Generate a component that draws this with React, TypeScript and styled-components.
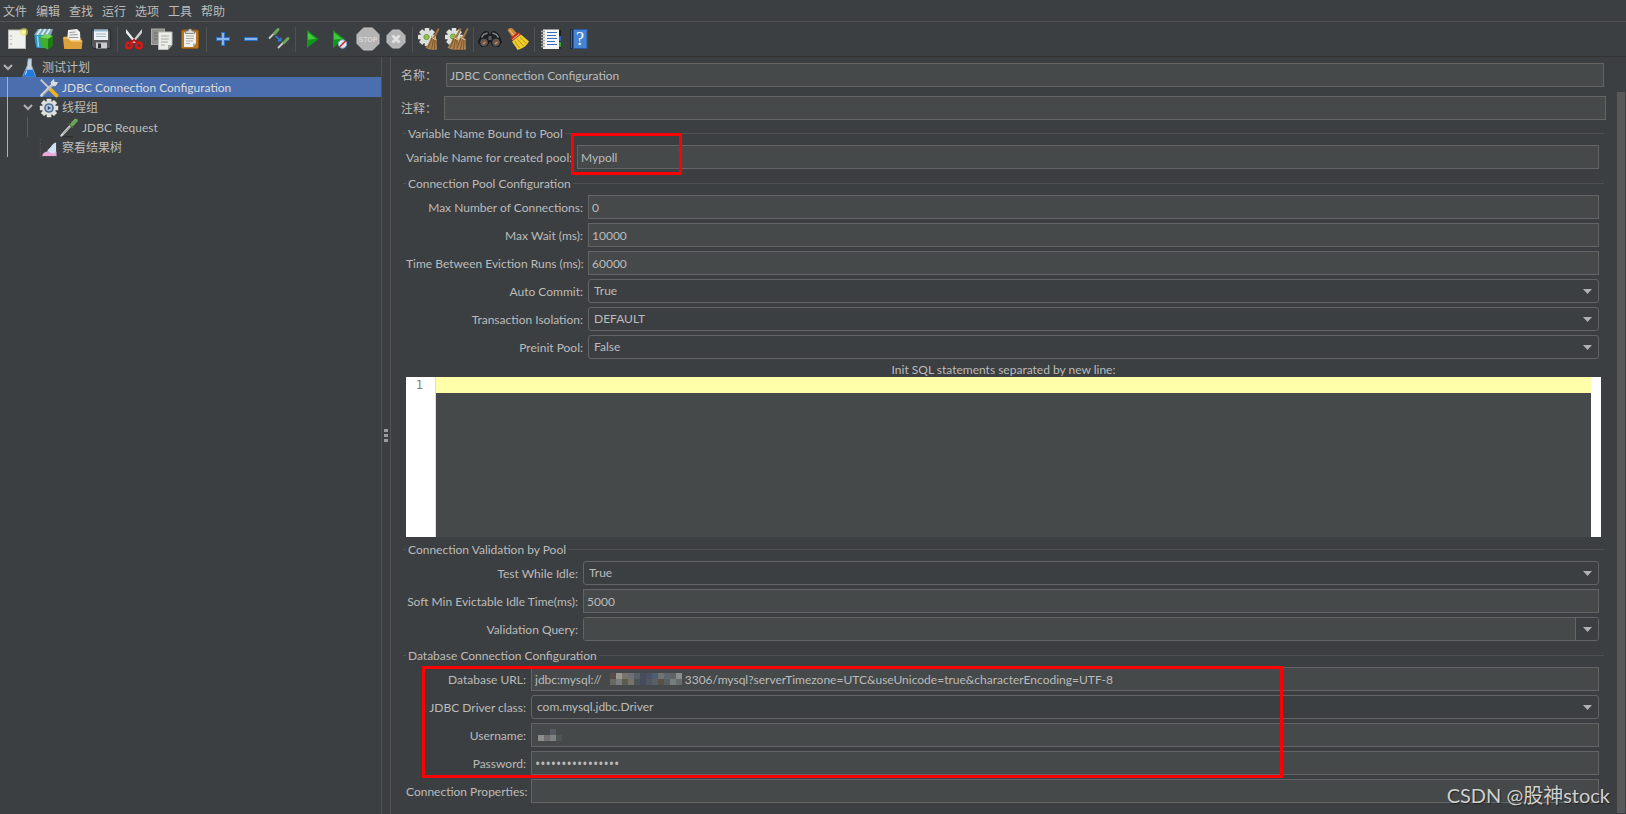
import React, { ReactNode } from 'react';
import styled, { createGlobalStyle, css } from 'styled-components';

const color = {
  panel: '#3c3f41',
  field: '#45494a',
  border: '#646464',
  line: '#515151',
  dark: '#323232',
  text: '#bbbbbb',
  selection: '#4b6eaf',
  guide: '#7fbcf5',
  mark: '#ff0000',
};

const GlobalStyle = createGlobalStyle`
  * { box-sizing: border-box; }
  body {
    margin: 0;
    background: ${color.panel};
    color: ${color.text};
    font: 12px/16px Lato, 'Noto Sans CJK SC', sans-serif;
  }
  button, input, select, textarea { font: inherit; color: inherit; margin: 0; }
`;

/* ---------- layout ---------- */

const Window = styled.div`
  position: relative;
  display: flex;
  flex-direction: column;
  min-height: 100vh;
`;

const MenuBar = styled.nav`
  display: flex;
  gap: 9px;
  height: 22px;
  padding: 2px 3px 0;
  border-bottom: 1px solid ${color.line};
`;

const MenuButton = styled.button`
  padding: 0;
  border: 0;
  background: none;
  white-space: nowrap;
`;

const Toolbar = styled.div`
  display: flex;
  align-items: center;
  height: 35px;
  padding: 0 3px;
  border-bottom: 1px solid ${color.dark};
`;

const ToolButton = styled.button`
  display: flex;
  justify-content: center;
  flex: none;
  width: 28px;
  padding: 0;
  border: 0;
  background: none;
`;

const Separator = styled.span`
  flex: none;
  width: 5px;
  height: 25px;
  background: linear-gradient(${color.line}, ${color.line}) 2px 0 / 1px 100% no-repeat;
`;

const Body = styled.div`
  display: flex;
  flex: 1;
`;

const TreePane = styled.aside`
  flex: none;
  width: 382px;
  border-right: 1px solid ${color.line};
`;

const Splitter = styled.div`
  display: flex;
  flex: none;
  align-items: center;
  justify-content: center;
  width: 9px;
  border-right: 1px solid ${color.line};
`;

const Editor = styled.main`
  flex: 1;
  min-width: 0;
  padding: 6px 10px 5px 10px;
`;

const ScrollTrack = styled.div`
  display: flex;
  flex: none;
  width: 9px;
  padding: 35px 1px 1px 0;
`;

const ScrollThumb = styled.div`
  flex: 1;
  background: #595959;
`;

/* ---------- tree ---------- */

const TreeList = styled.ul<{ $guide?: number; $active?: boolean }>`
  position: relative;
  margin: 0;
  padding: 0;
  list-style: none;
  ${p => p.$guide !== undefined && css`
    &::before {
      content: '';
      position: absolute;
      top: 0;
      bottom: 0;
      left: ${p.$guide}px;
      width: 1px;
      background: ${p.$active ? color.guide : '#565a5c'};
    }
  `}
`;

const TreeRow = styled.div<{ $level: number; $selected?: boolean }>`
  display: flex;
  align-items: center;
  height: 20px;
  padding-top: 1px;
  padding-left: ${p => p.$level * 20}px;
  ${p => p.$selected && css`background: ${color.selection}; color: #dddddd;`}
`;

const Twisty = styled.span`
  display: flex;
  justify-content: center;
  width: 16px;
`;

const NodeIcon = styled.span`
  display: flex;
  justify-content: center;
  width: 26px;
`;

/* ---------- form ---------- */

const HeaderRow = styled.div<{ $inset?: boolean }>`
  display: grid;
  grid-template-columns: ${p => (p.$inset ? 45 : 43)}px 1fr;
  align-items: center;
  margin-bottom: ${p => (p.$inset ? 9 : 4)}px;
  padding-right: ${p => (p.$inset ? 3 : 1)}px;
`;

const HeaderLabel = styled.label`
  padding-top: 2px;
  white-space: nowrap;
`;

const Group = styled.section<{ $tight?: boolean }>`
  padding: 0 3px ${p => (p.$tight ? 3 : 5)}px 2px;
`;

const GroupTitle = styled.h2`
  display: flex;
  align-items: center;
  gap: 2px;
  height: 18px;
  margin: 0 0 3px;
  font: inherit;
  white-space: nowrap;
  &::before, &::after { content: ''; height: 1px; background: ${color.line}; }
  &::before { width: 3px; }
  &::after { flex: 1; }
`;

const TitleText = styled.span`
  padding-top: 2px;
`;

const Rows = styled.div<{ $label: number }>`
  position: relative;
  display: grid;
  grid-template-columns: ${p => p.$label}px 1fr;
  column-gap: 5px;
  row-gap: 4px;
  align-items: center;
  padding: 0 5px 0 3px;
`;

const Label = styled.label`
  padding-top: 2px;
  text-align: right;
  white-space: nowrap;
`;

const FieldBox = styled.div`
  position: relative;
  display: flex;
  min-width: 0;
`;

const TextInput = styled.input`
  flex: 1;
  width: 100%;
  min-width: 0;
  height: 24px;
  padding: 0 3px;
  border: 1px solid ${color.border};
  border-radius: 0;
  background: ${color.field};
  outline: 0;
  &[type='password'] { font-family: 'Open Sans', sans-serif; font-size: 14px; }
`;

const Select = styled.select`
  appearance: none;
  flex: 1;
  width: 100%;
  height: 24px;
  padding: 0 24px 0 5px;
  border: 1px solid ${color.border};
  border-radius: 3px;
  background: ${color.panel};
  outline: 0;
`;

const SelectArrow = styled.span`
  position: absolute;
  top: 10px;
  right: 7px;
  display: flex;
  pointer-events: none;
`;

const Combo = styled.div`
  display: flex;
  flex: 1;
  height: 24px;
  overflow: hidden;
  border: 1px solid ${color.border};
  border-radius: 3px;
`;

const ComboInput = styled.input`
  flex: 1;
  min-width: 0;
  padding: 0 3px;
  border: 0;
  background: ${color.field};
  outline: 0;
`;

const ComboButton = styled.button`
  display: flex;
  align-items: center;
  justify-content: center;
  width: 23px;
  padding: 0;
  border: 0;
  border-left: 1px solid ${color.border};
  background: ${color.panel};
`;

const SqlLabel = styled.label`
  display: block;
  height: 18px;
  padding-top: 3px;
  text-align: center;
`;

const SqlEditor = styled.div`
  display: flex;
  height: 160px;
  margin: 0 3px;
  border-right: 10px solid #ffffff;
`;

const Gutter = styled.div`
  width: 30px;
  padding-right: 12px;
  border-right: 1px solid #dddddd;
  background: #ffffff;
  color: #808080;
  font: 12px/16px 'DejaVu Sans Mono', monospace;
  text-align: right;
`;

const SqlText = styled.textarea`
  flex: 1;
  padding: 0 2px;
  border: 0;
  resize: none;
  outline: 0;
  background: linear-gradient(#ffffaa, #ffffaa) 0 0 / 100% 16px no-repeat ${color.field};
  color: #000000;
`;

/* ---------- overlays ---------- */

const mark = css`
  position: absolute;
  border: 3px solid ${color.mark};
  pointer-events: none;
`;

const PoolMark = styled.div`
  ${mark}
  top: -12px;
  left: -6px;
  width: 111px;
  height: 42px;
`;

const DatabaseMark = styled.div`
  ${mark}
  top: -1px;
  left: 19px;
  width: 861px;
  height: 112px;
`;

const Mosaic = styled.svg`
  position: absolute;
  top: 6px;
  pointer-events: none;
`;

const UrlMosaic = styled(Mosaic)` left: 79px; `;
const UserMosaic = styled(Mosaic)` left: 7px; `;

const Watermark = styled.div`
  position: absolute;
  right: 16px;
  bottom: 4px;
  color: #d0d0d0;
  font: 20px/30px Lato, 'Noto Sans CJK SC', sans-serif;
  text-shadow: 1px 1px 1px #222222;
  pointer-events: none;
`;

/* ---------- icons ---------- */

const Svg = ({ size = 24, children }: { size?: number; children: ReactNode }) => (
  <svg width={size} height={size} viewBox="0 0 24 24" aria-hidden="true">{children}</svg>
);

const Arrow = () => (
  <svg width="9" height="5" viewBox="0 0 9 5" aria-hidden="true"><path d="M0 0h9L4.500 5z" fill="#afb1b3" /></svg>
);

const Chevron = () => (
  <svg width="10" height="7" viewBox="0 0 10 7" aria-hidden="true">
    <path d="M1 1l4 4 4-4" fill="none" stroke="#afb1b3" strokeWidth="2" />
  </svg>
);

const gearTeeth = [0, 45, 90, 135, 180, 225, 270, 315];

const Gear = ({ cx, cy, r }: { cx: number; cy: number; r: number }) => (
  <g>
    {gearTeeth.map(a => (
      <rect key={a} x={cx - r / 4} y={cy - r} width={r / 2} height={r / 2} rx=".6" fill="#e0e2de"
        transform={`rotate(${a} ${cx} ${cy})`} />
    ))}
    <circle cx={cx} cy={cy} r={r * 0.76} fill="#dcdeda" />
  </g>
);

const Broom = ({ x }: { x: number }) => (
  <g transform={`translate(${x} 0)`}>
    <path d="M21 1l1.500 1-4.500 9-2-1z" fill="#a5743c" />
    <path d="M14.500 9l5 3 .5 10.500c-4 .8-9 .2-11.500-2 3-3 4.500-7 6-11.500z" fill="#b08250" />
    <path d="M15 11l-4 10M16.500 12l-2 10.500M18 13l-.5 9.500" stroke="#7d5528" fill="none" />
    <path d="M14.500 10.500l5 2.500" stroke="#e0c090" />
  </g>
);

const NewIcon = () => (
  <Svg>
    <rect x="3.500" y="3" width="17" height="18.500" fill="#f0f0ee" stroke="#b9bab5" />
    <path d="M6 8v2M6 12v1M6 16v2" stroke="#999" />
    <circle cx="19" cy="5" r="4" fill="#f5e44a" opacity=".55" />
    <circle cx="19" cy="5" r="2" fill="#fff9a0" />
  </Svg>
);

const TemplatesIcon = () => (
  <Svg>
    <path d="M1 8l4-6h15l-2 6z" fill="#7fa9b8" />
    <path d="M4 8l4-6M8.500 8l4-6M13 8l4-6" stroke="#dcecf2" strokeWidth="1.600" />
    <path d="M1.500 8h10v13H4c-1 0-2-6-2.500-13z" fill="#2b95c4" />
    <path d="M4.500 9l1 11" stroke="#9cdcf2" strokeWidth="1.400" />
    <path d="M7 10l8 2v10.500l-7-3z" fill="#3fae2a" />
    <path d="M15 12l5-3v9.500l-5 4z" fill="#1e7d12" />
    <path d="M7 10l6-3 7 2-5 3z" fill="#73d84f" />
  </Svg>
);

const OpenIcon = () => (
  <Svg>
    <path d="M2.500 9.500h5l1 1.500h12v9H3z" fill="#b57a1b" />
    <path d="M7 3l9-1 3 3 .5 9H6z" fill="#f0f0ee" />
    <path d="M8.500 5.500l6-.5M8.500 8l8-.5M8 10.500h9" stroke="#9a9a9a" />
    <path d="M2 10.500h5l3 3h11.500l-.8 8.500H3.200z" fill="#dda03a" />
    <path d="M2.500 11h4.500l3 3h11" stroke="#ffd986" fill="none" />
  </Svg>
);

const SaveIcon = () => (
  <Svg>
    <path d="M2.500 3h19v18.500H4.500l-2-2z" fill="#54575a" stroke="#2b2d2f" />
    <rect x="5" y="2.500" width="14" height="10.500" fill="#eef2f4" />
    <path d="M5 3h14v1.500H5z" fill="#8fb8d4" />
    <path d="M7 7h10M7 9.500h10" stroke="#a6b4be" />
    <rect x="7" y="15.500" width="11" height="6" fill="#c9cbcc" />
    <rect x="9" y="16.500" width="3" height="4.500" fill="#2e3133" />
  </Svg>
);

const CutIcon = () => (
  <Svg>
    <path d="M4 2l10.500 13-2 1L4 6z" fill="#eceeec" />
    <path d="M20 2L9.500 15l2 1L20 6z" fill="#cfd1cf" />
    <circle cx="7" cy="18.500" r="2.800" fill="none" stroke="#dd1515" strokeWidth="2.400" />
    <circle cx="17" cy="18.500" r="2.800" fill="none" stroke="#dd1515" strokeWidth="2.400" />
    <path d="M8 16l4-3 4 3" fill="none" stroke="#c81010" strokeWidth="2" />
  </Svg>
);

const CopyIcon = () => (
  <Svg>
    <rect x="1.500" y="2" width="13" height="15.500" fill="#8f918f" stroke="#a8aaa8" />
    <path d="M4 6h6M4 9h5M4 12h5" stroke="#6f716f" />
    <path d="M8.500 5h13.500v13l-4 4.500H8.500z" fill="#ecedeb" stroke="#bcbdba" />
    <path d="M11 9h8M11 12h8M11 15h7M11 18h4" stroke="#a6a8a6" />
    <path d="M22 18h-4v4.500z" fill="#a5a6a3" />
  </Svg>
);

const PasteIcon = () => (
  <Svg>
    <rect x="3.500" y="3" width="17" height="18.500" rx="1.500" fill="#b87423" stroke="#8f560f" />
    <path d="M6 5.500h12v11l-3 3.500H6z" fill="#f0f0ee" />
    <path d="M8 9h8M8 11.500h8M8 14h7M8 16.500h4" stroke="#a9aaa8" />
    <path d="M18 16.500h-3V20z" fill="#a9aaa7" />
    <path d="M7.500 6.500V4H10l1-2h2l1 2h2.500v2.500z" fill="#d8dad8" stroke="#777" strokeWidth=".8" />
  </Svg>
);

const PlusIcon = () => (
  <Svg><path d="M12 5v14M5 12h14" stroke="#2f6fc4" strokeWidth="4" /><path d="M12 6v12M6 12h12" stroke="#86b4ec" strokeWidth="2" /></Svg>
);

const MinusIcon = () => (
  <Svg><path d="M5 12h14" stroke="#2f6fc4" strokeWidth="4" /><path d="M6 12h12" stroke="#86b4ec" strokeWidth="2" /></Svg>
);

const ToggleIcon = () => (
  <Svg>
    <path d="M2 11.500l6-6" stroke="#c8ccc8" strokeWidth="1.800" />
    <path d="M7.500 6.500l3.500-4" stroke="#6ca558" strokeWidth="3" strokeLinecap="round" />
    <path d="M11 21l6-6" stroke="#c8ccc8" strokeWidth="1.800" />
    <path d="M17 15.500l4-4" stroke="#6ca558" strokeWidth="3" strokeLinecap="round" />
    <path d="M8.500 9l4.500 4" stroke="#2f80e0" strokeWidth="1.600" />
    <path d="M14.500 10v4.500H10z" fill="#2f80e0" />
  </Svg>
);

const StartIcon = () => (
  <Svg><path d="M7 3l11.500 9L7 21z" fill="#109818" /><path d="M8 5.500l8 6.200-8 1z" fill="#42c83f" /></Svg>
);

const StartNoPauseIcon = () => (
  <Svg>
    <path d="M5 3l11.500 9L5 21z" fill="#109818" />
    <path d="M6 5.500l8 6.200-8 1z" fill="#42c83f" />
    <circle cx="14.500" cy="17" r="4.200" fill="#dde8f4" stroke="#7ba6d4" />
    <path d="M11.500 20l6-6" stroke="#e02020" strokeWidth="1.600" />
  </Svg>
);

const StopIcon = () => (
  <Svg>
    <path d="M7.500 1h9L23 7.500v9L16.500 23h-9L1 16.500v-9z" fill="#b4b4b4" stroke="#c4c4c4" />
    <text x="12" y="15" fontFamily="Liberation Sans, sans-serif" fontSize="7" fontWeight="700" textAnchor="middle" fill="#d6d6d6">STOP</text>
  </Svg>
);

const ShutdownIcon = () => (
  <Svg>
    <path d="M8.500 3h7L21 8.500v7L15.500 21h-7L3 15.500v-7z" fill="#b4b4b4" stroke="#c2c2c2" />
    <path d="M8.500 8.500l7 7M15.500 8.500l-7 7" stroke="#e2e2e2" strokeWidth="2.800" />
  </Svg>
);

const ClearIcon = () => (
  <Svg><Gear cx={10} cy={10} r={9} /><circle cx="9.500" cy="10" r="2.600" fill="#8fc251" stroke="#6f9b40" /><Broom x={0} /></Svg>
);

const ClearAllIcon = () => (
  <Svg><Gear cx={9} cy={10} r={9} /><circle cx="8" cy="9.500" r="2.600" fill="#8fc251" stroke="#6f9b40" /><Broom x={-6} /><Broom x={1} /></Svg>
);

const SearchIcon = () => (
  <Svg>
    <path d="M4 7q3-3.500 6-2l1 3h2l1-3q3-1.500 6 2l3.500 8-3 4.500-6-1-1.500-4h-2l-1.500 4-6 1-3-4.500z" fill="#1f2123" stroke="#131415" />
    <path d="M3.500 10.500l2-3 4-1.500M20.500 10.500l-2-3-4-1.500" fill="none" stroke="#85878a" strokeWidth="1.400" />
    <circle cx="6" cy="15.500" r="3.400" fill="#6b5548" stroke="#55585a" />
    <circle cx="18" cy="15.500" r="3.400" fill="#6b5548" stroke="#55585a" />
    <path d="M5 17l2.500-2M17 17l2.500-2" stroke="#d08a66" strokeWidth="1.600" />
    <rect x="10.500" y="9" width="3" height="4" fill="#5b5e60" />
  </Svg>
);

const ResetSearchIcon = () => (
  <Svg>
    <path d="M1.500 3q2-3 5-1.500l5.500 6-5 3.500z" fill="#c98a3c" />
    <path d="M3.500 3l5 6" stroke="#f0c78a" />
    <path d="M4.500 11l7.500-6 3 3-8 6z" fill="#c62a1c" />
    <path d="M6 14.500L15 7.500l8 7c-2 4-6 7-11.500 8.500-1.500-3-3.500-5.500-5.500-8.500z" fill="#efcf2e" />
    <path d="M9 14l4.500 7M11.500 12.500l6 6.500M14 10.500l6.500 6" stroke="#b98d10" fill="none" />
    <path d="M6.500 12.500l7-5.500" stroke="#f6d0a0" />
  </Svg>
);

const FunctionIcon = () => (
  <Svg>
    <rect x="18" y="3" width="4" height="18.500" fill="#1d1f20" />
    <rect x="19" y="9" width="3" height="5" fill="#2a62c8" />
    <rect x="19" y="15" width="3" height="5" fill="#2fa033" />
    <rect x="4" y="2.500" width="16" height="19.500" fill="#f6f6f4" />
    <path d="M8 5.500h10M8 8.500h9M8 11.500h10M8 14.500h8M8 17.500h10" stroke="#2f6fc4" />
    <path d="M2 4.500h4M2 7.500h4M2 10.500h4M2 13.500h4M2 16.500h4M2 19.500h4" stroke="#a5a7a5" strokeWidth="1.400" />
  </Svg>
);

const HelpIcon = () => (
  <Svg>
    <path d="M3 2h5v20H3z" fill="#1b2c47" />
    <path d="M4.500 3v18" stroke="#4a5f80" />
    <rect x="6.500" y="2.500" width="13.500" height="19" fill="#4583d4" stroke="#2a5ba0" />
    <text x="13" y="18" fontFamily="Liberation Serif, serif" fontSize="18" textAnchor="middle" fill="#ffffff">?</text>
  </Svg>
);

const FlaskIcon = () => (
  <Svg size={20}>
    <path d="M11 1h4v8l5 13H4.500L10 9z" fill="#c2d6e4" stroke="#8ea6b6" />
    <path d="M8 14h8.500l3.500 8.500H4.500z" fill="#1f7ae0" />
    <path d="M9.500 15l-2 5" stroke="#9fd0ff" strokeWidth="1.500" />
  </Svg>
);

const ToolsIcon = () => (
  <Svg size={20}>
    <path d="M2 2l13 13" stroke="#c4c6c4" strokeWidth="2.400" />
    <path d="M14 14l7 7" stroke="#f0b21c" strokeWidth="4.500" strokeLinecap="round" />
    <path d="M3 21L17 7" stroke="#dcdedc" strokeWidth="3.200" strokeLinecap="round" />
    <path d="M14 5l4-4 .5 3.500L23 5l-3 4.500-5 .5z" fill="#dcdedc" />
    <path d="M4 21L16 8.500" stroke="#77797b" strokeWidth=".8" />
  </Svg>
);

const ThreadGroupIcon = () => (
  <Svg size={20}>
    <Gear cx={12} cy={12} r={11} />
    <circle cx="12" cy="12" r="5.800" fill="#4c7099" />
    <circle cx="12" cy="12" r="3.800" fill="#b8c8da" />
    <path d="M10.500 9.500l4 2.500-4 2.500z" fill="#244b78" />
  </Svg>
);

const SamplerIcon = () => (
  <Svg size={20}>
    <path d="M3 22.500h14" stroke="#2c2e30" strokeWidth="1.600" />
    <path d="M3 21L14 9" stroke="#cfd3cf" strokeWidth="3" strokeLinecap="round" />
    <path d="M5 19l8-8.500" stroke="#8d918d" />
    <path d="M12 7l5 5" stroke="#44703a" strokeWidth="2" />
    <path d="M16 7.500l4-4.500" stroke="#6aa556" strokeWidth="4.800" strokeLinecap="round" />
  </Svg>
);

const ResultsIcon = () => (
  <Svg size={20}>
    <path d="M1.500 1v21.500H22" stroke="#5f6264" strokeDasharray="2 2" fill="none" />
    <path d="M4 21.500c0-3 3-5 5-5s3-5 5.500-5 3 3 6.500 5v5z" fill="#e8a8dc" />
    <path d="M10 14.500c4-1 5-8 10.500-9v11c-3 3-7 3-10.500-2z" fill="#cfe2f8" />
  </Svg>
);

/* ---------- data ---------- */

const menus = ['文件', '编辑', '查找', '运行', '选项', '工具', '帮助'];

const toolGroups: [string, () => ReactNode][][] = [
  [['新建', NewIcon], ['模板', TemplatesIcon], ['打开', OpenIcon], ['保存', SaveIcon]],
  [['剪切', CutIcon], ['复制', CopyIcon], ['粘贴', PasteIcon]],
  [['展开', PlusIcon], ['折叠', MinusIcon], ['切换', ToggleIcon]],
  [['启动', StartIcon], ['不停顿启动', StartNoPauseIcon], ['停止', StopIcon], ['关闭', ShutdownIcon]],
  [['清除', ClearIcon], ['清除全部', ClearAllIcon]],
  [['查找', SearchIcon], ['重置查找', ResetSearchIcon]],
  [['函数助手', FunctionIcon], ['帮助', HelpIcon]],
];

type Cell = [number, number, string];

const urlCells: Cell[] = [
  [0, 0, '#5a4c4c'], [6, 0, '#9a9793'], [12, 0, '#77756a'], [18, 0, '#6d7078'], [24, 0, '#5a6068'],
  [0, 6, '#66695f'], [6, 6, '#797c7c'], [12, 6, '#5b5c50'], [18, 6, '#77736a'], [24, 6, '#4c5256'],
  [30, 0, '#474c5c'], [36, 0, '#4b5162'], [42, 0, '#496074'], [48, 0, '#6f7473'], [54, 0, '#5e6670'],
  [30, 6, '#474b5c'], [36, 6, '#505664'], [42, 6, '#5a5f66'], [48, 6, '#594f47'], [54, 6, '#56605f'],
  [60, 0, '#5f6464'], [66, 0, '#8c8e8d'], [60, 6, '#777c7c'], [66, 6, '#666b6c'],
];

const userCells: Cell[] = [
  [12, 0, '#585a66'], [0, 6, '#8c8e8d'], [6, 6, '#726f70'], [12, 6, '#7e8181'], [18, 6, '#4e5354'],
];

/* ---------- parts ---------- */

const Cells = ({ cells }: { cells: Cell[] }) => (
  <>{cells.map(([x, y, fill]) => <rect key={`${x}-${y}`} x={x} y={y} width="6" height="6" fill={fill} />)}</>
);

const TextRow = ({ id, label, value = '', type = 'text', children }:
  { id: string; label: string; value?: string; type?: string; children?: ReactNode }) => (
  <>
    <Label htmlFor={id}>{label}</Label>
    <FieldBox>
      <TextInput id={id} type={type} defaultValue={value} autoComplete="off" spellCheck={false} />
      {children}
    </FieldBox>
  </>
);

const SelectRow = ({ id, label, options }: { id: string; label: string; options: string[] }) => (
  <>
    <Label htmlFor={id}>{label}</Label>
    <FieldBox>
      <Select id={id}>{options.map(o => <option key={o}>{o}</option>)}</Select>
      <SelectArrow><Arrow /></SelectArrow>
    </FieldBox>
  </>
);

const Title = ({ children }: { children: ReactNode }) => (
  <GroupTitle><TitleText>{children}</TitleText></GroupTitle>
);

const Node = ({ level, icon, text, open, selected }:
  { level: number; icon: ReactNode; text: string; open?: boolean; selected?: boolean }) => (
  <TreeRow $level={level} $selected={selected}>
    <Twisty>{open && <Chevron />}</Twisty>
    <NodeIcon>{icon}</NodeIcon>
    {text}
  </TreeRow>
);

export default function App() {
  return (
    <Window>
      <GlobalStyle />
      <MenuBar>{menus.map(m => <MenuButton key={m}>{m}</MenuButton>)}</MenuBar>
      <Toolbar>
        {toolGroups.map((group, i) => (
          <React.Fragment key={i}>
            {i > 0 && <Separator />}
            {group.map(([name, Icon]) => <ToolButton key={name} aria-label={name}><Icon /></ToolButton>)}
          </React.Fragment>
        ))}
      </Toolbar>
      <Body>
        <TreePane>
          <TreeList>
            <li>
              <Node level={0} icon={<FlaskIcon />} text="测试计划" open />
              <TreeList $guide={7} $active>
                <li><Node level={1} icon={<ToolsIcon />} text="JDBC Connection Configuration" selected /></li>
                <li>
                  <Node level={1} icon={<ThreadGroupIcon />} text="线程组" open />
                  <TreeList $guide={27}>
                    <li><Node level={2} icon={<SamplerIcon />} text="JDBC Request" /></li>
                  </TreeList>
                </li>
                <li><Node level={1} icon={<ResultsIcon />} text="察看结果树" /></li>
              </TreeList>
            </li>
          </TreeList>
        </TreePane>
        <Splitter>
          <svg width="4" height="13" viewBox="0 0 4 13" aria-hidden="true">
            <path d="M0 0h4v3H0zM0 5h4v3H0zM0 10h4v3H0z" fill="#9a9c9e" />
          </svg>
        </Splitter>
        <Editor>
          <HeaderRow $inset>
            <HeaderLabel htmlFor="name">名称：</HeaderLabel>
            <TextInput id="name" defaultValue="JDBC Connection Configuration" spellCheck={false} />
          </HeaderRow>
          <HeaderRow>
            <HeaderLabel htmlFor="comment">注释：</HeaderLabel>
            <TextInput id="comment" />
          </HeaderRow>

          <Group>
            <Title>Variable Name Bound to Pool</Title>
            <Rows $label={166}>
              <TextRow id="pool" label="Variable Name for created pool:" value="Mypoll"><PoolMark /></TextRow>
            </Rows>
          </Group>

          <Group $tight>
            <Title>Connection Pool Configuration</Title>
            <Rows $label={177}>
              <TextRow id="max" label="Max Number of Connections:" value="0" />
              <TextRow id="wait" label="Max Wait (ms):" value="10000" />
              <TextRow id="eviction" label="Time Between Eviction Runs (ms):" value="60000" />
              <SelectRow id="commit" label="Auto Commit:" options={['True', 'False']} />
              <SelectRow id="isolation" label="Transaction Isolation:" options={['DEFAULT']} />
              <SelectRow id="preinit" label="Preinit Pool:" options={['False', 'True']} />
            </Rows>
            <SqlLabel htmlFor="sql">Init SQL statements separated by new line:</SqlLabel>
            <SqlEditor>
              <Gutter>1</Gutter>
              <SqlText id="sql" spellCheck={false} />
            </SqlEditor>
          </Group>

          <Group>
            <Title>Connection Validation by Pool</Title>
            <Rows $label={172}>
              <SelectRow id="idle" label="Test While Idle:" options={['True', 'False']} />
              <TextRow id="evictable" label="Soft Min Evictable Idle Time(ms):" value="5000" />
              <Label htmlFor="query">Validation Query:</Label>
              <Combo>
                <ComboInput id="query" />
                <ComboButton aria-label="Validation Query"><Arrow /></ComboButton>
              </Combo>
            </Rows>
          </Group>

          <Group>
            <Title>Database Connection Configuration</Title>
            <Rows $label={120}>
              <TextRow id="url" label="Database URL:"
                value={`jdbc:mysql://${' '.repeat(27)}3306/mysql?serverTimezone=UTC&useUnicode=true&characterEncoding=UTF-8`}>
                <UrlMosaic width="72" height="12"><Cells cells={urlCells} /></UrlMosaic>
              </TextRow>
              <SelectRow id="driver" label="JDBC Driver class:" options={['com.mysql.jdbc.Driver']} />
              <TextRow id="user" label="Username:">
                <UserMosaic width="24" height="12"><Cells cells={userCells} /></UserMosaic>
              </TextRow>
              <TextRow id="password" label="Password:" type="password" value="0123456789abcdef" />
              <TextRow id="props" label="Connection Properties:" />
              <DatabaseMark />
            </Rows>
          </Group>
        </Editor>
        <ScrollTrack><ScrollThumb /></ScrollTrack>
      </Body>
      <Watermark>CSDN @股神stock</Watermark>
    </Window>
  );
}
